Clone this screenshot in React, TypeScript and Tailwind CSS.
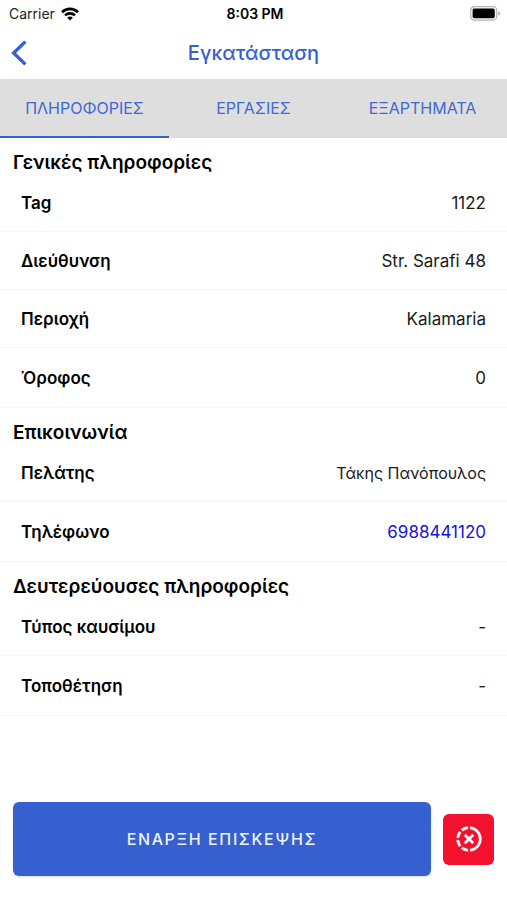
import React, { useState } from 'react';

type Row = { label: string; value: string; href?: string };
type Section = { title: string; rows: Row[] };

const TABS = ['ΠΛΗΡΟΦΟΡΙΕΣ', 'ΕΡΓΑΣΙΕΣ', 'ΕΞΑΡΤΗΜΑΤΑ'];

const SECTIONS: Section[] = [
  {
    title: 'Γενικές πληροφορίες',
    rows: [
      { label: 'Tag', value: '1122' },
      { label: 'Διεύθυνση', value: 'Str. Sarafi 48' },
      { label: 'Περιοχή', value: 'Kalamaria' },
      { label: 'Όροφος', value: '0' },
    ],
  },
  {
    title: 'Επικοινωνία',
    rows: [
      { label: 'Πελάτης', value: 'Τάκης Πανόπουλος' },
      { label: 'Τηλέφωνο', value: '6988441120', href: 'tel:6988441120' },
    ],
  },
  {
    title: 'Δευτερεύουσες πληροφορίες',
    rows: [
      { label: 'Τύπος καυσίμου', value: '-' },
      { label: 'Τοποθέτηση', value: '-' },
    ],
  },
];

// Names in Greek script are set slightly smaller than Latin values
const isGreek = (text: string) => /[\u0370-\u03ff]/.test(text);

const WifiIcon: React.FC = () => (
  <svg width="18" height="14" viewBox="0 0 18 14" fill="none" stroke="#000" strokeWidth="2.6">
    <path d="M1 5.2a11.4 11.4 0 0 1 16 0" />
    <path d="M4 8.4a7.2 7.2 0 0 1 10 0" />
    <path d="M9 13.6 6.2 10.8a4 4 0 0 1 5.6 0z" fill="#000" stroke="none" />
  </svg>
);

const BatteryIcon: React.FC = () => (
  <svg width="31" height="15" viewBox="0 0 31 15">
    <rect x="0.7" y="0.7" width="26" height="13.4" rx="3.6" fill="#fff" stroke="#b4b4b4" strokeWidth="1.2" />
    <rect x="2.6" y="2.6" width="22.2" height="9.6" rx="1.8" fill="#000" />
    <path d="M28.2 5.2c1.3.4 2 1.2 2 2.2s-.7 1.8-2 2.2z" fill="#b4b4b4" />
  </svg>
);

const BackIcon: React.FC = () => (
  <svg width="16" height="26" viewBox="0 0 16 26" fill="none" stroke="#3660cf" strokeWidth="3.4">
    <path d="M14.4 1.6 2.6 13l11.8 11.4" />
  </svg>
);

const ProgressCloseIcon: React.FC = () => (
  <svg width="30" height="30" viewBox="0 0 24 24" fill="#fff" stroke="#fff" strokeWidth="0.3">
    <path d="M13 2.03v2.02c4.39.54 7.5 4.53 6.96 8.92-.46 3.64-3.32 6.53-6.96 6.96v2c5.5-.55 9.5-5.43 8.95-10.93-.45-4.75-4.22-8.5-8.95-8.97z" />
    <path d="M11 2.06c-1.95.19-3.81.94-5.33 2.2L7.1 5.74c1.12-.9 2.47-1.48 3.9-1.68z" />
    <path d="M4.26 5.67A9.9 9.9 0 0 0 2.05 11h2c.19-1.42.75-2.77 1.64-3.9z" />
    <path d="M2.06 13c.2 1.96.97 3.81 2.21 5.33l1.42-1.43A8 8 0 0 1 4.06 13z" />
    <path d="m7.1 18.37-1.43 1.37A10 10 0 0 0 11 22v-2a8 8 0 0 1-3.9-1.63z" />
    <path d="M14.59 8 12 10.59 9.41 8 8 9.41 10.59 12 8 14.59 9.41 16 12 13.41 14.59 16 16 14.59 13.41 12 16 9.41z" />
  </svg>
);

const InfoSection: React.FC<{ section: Section }> = ({ section }) => (
  <section>
    <h2 className="h-9 px-[13px] pt-[13px] text-[19px] leading-6 font-semibold">{section.title}</h2>
    <dl>
      {section.rows.map((row) => (
        <div
          key={row.label}
          className="flex h-[58px] items-center justify-between border-b border-[#f5f5f5] px-[21px] text-[17px] leading-6 last:h-[60px]"
        >
          <dt className="font-semibold">{row.label}</dt>
          <dd className={isGreek(row.value) ? 'text-base text-[#1a1a1a]' : 'text-[#1a1a1a]'}>
            {row.href ? (
              <a href={row.href} className="text-[#1414dc]">
                {row.value}
              </a>
            ) : (
              row.value
            )}
          </dd>
        </div>
      ))}
    </dl>
  </section>
);

const App: React.FC = () => {
  const [activeTab, setActiveTab] = useState<number>(0);

  return (
    <div className="flex min-h-screen flex-col bg-white font-['Inter','Liberation_Sans',sans-serif] text-black">
      {/* Status bar */}
      <div className="grid h-[27px] grid-cols-3 items-center pr-[6px] pl-[9px] text-sm">
        <div className="flex items-center gap-[6px] text-[#222]">
          Carrier
          <WifiIcon />
        </div>
        <div className="text-center font-semibold">8:03 PM</div>
        <div className="flex justify-end">
          <BatteryIcon />
        </div>
      </div>

      <header className="grid h-[52px] grid-cols-[40px_1fr_40px] items-center">
        <button type="button" aria-label="Πίσω" className="pl-[11px]">
          <BackIcon />
        </button>
        <h1 className="text-center text-xl font-medium text-[#3660cf]">Εγκατάσταση</h1>
      </header>

      <div role="tablist" className="grid h-[59px] grid-cols-3 bg-[#dedede]">
        {TABS.map((tab, index) => (
          <button
            key={tab}
            type="button"
            role="tab"
            aria-selected={index === activeTab}
            onClick={() => setActiveTab(index)}
            className={`border-b-2 pt-px text-base text-[#4169d1] ${
              index === activeTab ? 'border-[#3660cf]' : 'border-transparent'
            }`}
          >
            {tab}
          </button>
        ))}
      </div>

      <main>
        {SECTIONS.map((section) => (
          <InfoSection key={section.title} section={section} />
        ))}
      </main>

      <footer className="mt-auto flex items-center gap-3 px-[13px] pt-6 pb-6">
        <button
          type="button"
          className="h-[74px] flex-1 rounded-md bg-[#3660cf] text-base font-medium tracking-widest text-[#eef2ff] shadow-sm"
        >
          ΕΝΑΡΞΗ ΕΠΙΣΚΕΨΗΣ
        </button>
        <button
          type="button"
          aria-label="Ακύρωση"
          className="flex size-[51px] items-center justify-center rounded-md bg-[#f2122d]"
        >
          <ProgressCloseIcon />
        </button>
      </footer>
    </div>
  );
};

export default App;
